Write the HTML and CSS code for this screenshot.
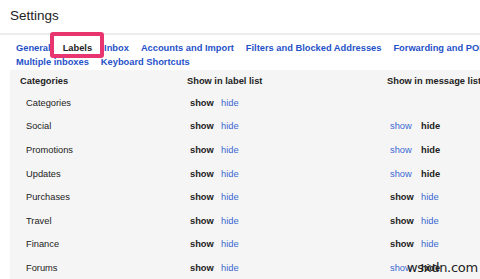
FILE: index.html
```html
<!DOCTYPE html>
<html lang="en">
<head>
	<meta charset="UTF-8">
	<title>Settings</title>
	<link rel="stylesheet" href="styles.css">
</head>
<body>
	<div class="title">Settings</div>
	<div class="rule"></div>
	<div class="tabs">
		<div class="tabrow">
			<a class="tab">General</a>
			<a class="tab current">Labels<span class="mark"></span></a>
			<a class="tab">Inbox</a>
			<a class="tab">Accounts and Import</a>
			<a class="tab">Filters and Blocked Addresses</a>
			<a class="tab">Forwarding and POP/IMAP</a>
		</div>
		<div class="tabrow">
			<a class="tab">Multiple inboxes</a>
			<a class="tab">Keyboard Shortcuts</a>
		</div>
	</div>
	<div class="labels">
		<div class="row head">
			<div>Categories</div>
			<div>Show in label list</div>
			<div>Show in message list</div>
		</div>
		<div class="row">
			<div class="name">Categories</div>
			<div class="opt"><b class="sw">show</b><a>hide</a></div>
			<div class="opt"></div>
		</div>
		<div class="row">
			<div class="name">Social</div>
			<div class="opt"><b class="sw">show</b><a>hide</a></div>
			<div class="opt"><a class="sw">show</a><b>hide</b></div>
		</div>
		<div class="row">
			<div class="name">Promotions</div>
			<div class="opt"><b class="sw">show</b><a>hide</a></div>
			<div class="opt"><a class="sw">show</a><b>hide</b></div>
		</div>
		<div class="row">
			<div class="name">Updates</div>
			<div class="opt"><b class="sw">show</b><a>hide</a></div>
			<div class="opt"><a class="sw">show</a><b>hide</b></div>
		</div>
		<div class="row">
			<div class="name">Purchases</div>
			<div class="opt"><b class="sw">show</b><a>hide</a></div>
			<div class="opt"><b class="sw">show</b><a>hide</a></div>
		</div>
		<div class="row">
			<div class="name">Travel</div>
			<div class="opt"><b class="sw">show</b><a>hide</a></div>
			<div class="opt"><b class="sw">show</b><a>hide</a></div>
		</div>
		<div class="row">
			<div class="name">Finance</div>
			<div class="opt"><b class="sw">show</b><a>hide</a></div>
			<div class="opt"><b class="sw">show</b><a>hide</a></div>
		</div>
		<div class="row">
			<div class="name">Forums</div>
			<div class="opt"><b class="sw">show</b><a>hide</a></div>
			<div class="opt"><a class="sw">show</a><b>hide</b></div>
		</div>
	</div>
	<div class="watermark">wsxdn.com</div>
</body>
</html>
```

FILE: styles.css
```css
html, body {
	margin: 0;
	background: #fff;
	overflow: hidden;
}
body {
	width: 480px;
	height: 279px;
	position: relative;
	font-family: "Liberation Sans", Arial, sans-serif;
	color: #222;
}
.title {
	font-size: 13.5px;
	line-height: 16px;
	padding: 8px 0 0 10px;
	height: 25px;
}
.rule {
	height: 2px;
	background: #ececec;
}
.tabs {
	padding: 6px 0 0 16px;
	height: 29px;
	font-size: 9.3px;
	font-weight: bold;
}
.tabrow {
	display: flex;
	gap: 12px;
	line-height: 14px;
	white-space: nowrap;
}
.tab {
	color: #1f52c8;
	position: relative;
}
.tab.current {
	color: #222;
}
.mark {
	position: absolute;
	left: -13px;
	top: -9px;
	width: 46px;
	height: 18px;
	border: 4px solid #e8346f;
	border-radius: 3px;
}
.labels {
	margin-left: 10px;
	background: #f5f5f5;
	height: 215px;
	font-size: 9.3px;
}
.row {
	display: grid;
	grid-template-columns: 177px 200px 1fr;
	align-items: center;
	height: 23.6px;
	white-space: nowrap;
}
.row.head {
	height: 21px;
	font-weight: bold;
}
.row.head > div:first-child {
	padding-left: 10px;
}
.name {
	padding-left: 16px;
}
.opt {
	padding-left: 3px;
}
.opt a {
	color: #3a68d0;
}
.opt b {
	color: #222;
}
.sw {
	display: inline-block;
	width: 31px;
}
.watermark {
	position: absolute;
	left: 407px;
	top: 260px;
	font-size: 13px;
	color: #222;
	font-family: "DejaVu Sans", sans-serif;
	letter-spacing: -0.3px;
}
```
